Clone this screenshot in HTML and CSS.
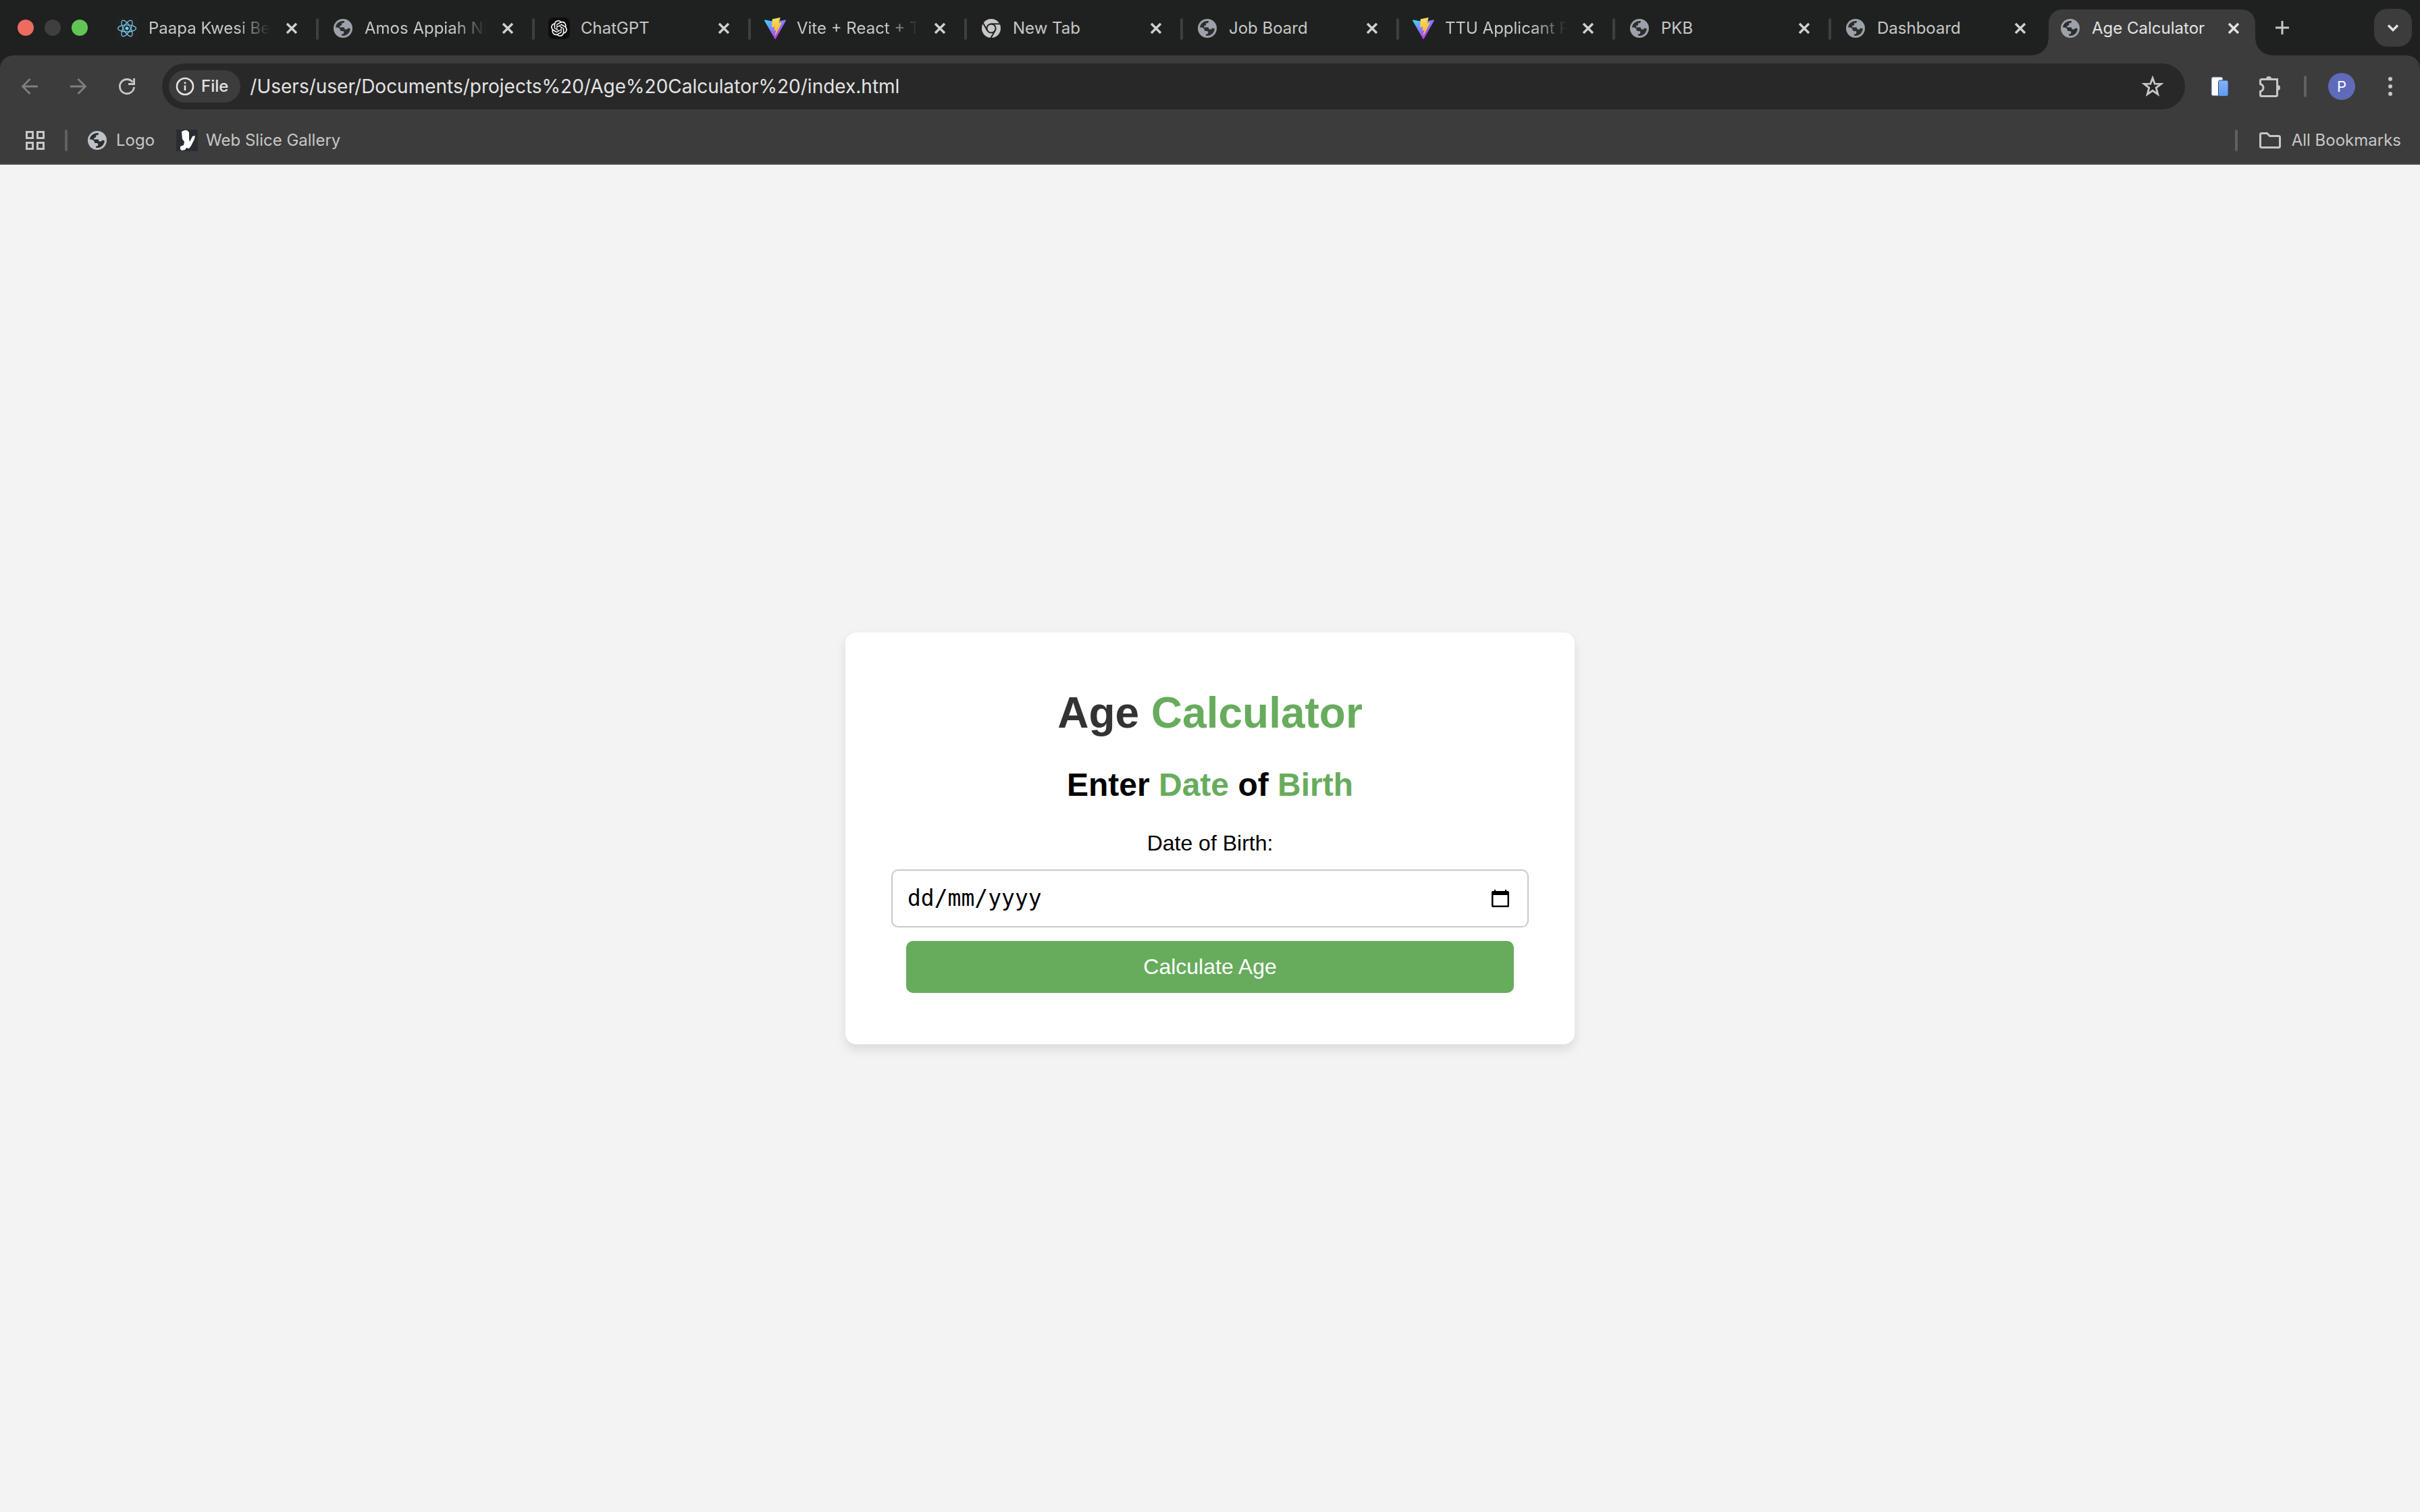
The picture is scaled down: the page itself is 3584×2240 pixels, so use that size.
FILE: index.html
```html
<!DOCTYPE html>
<html lang="en-GB">
<head>
<meta charset="utf-8">
<title>Age Calculator</title>
<link rel="stylesheet" href="styles.css">
</head>
<body>
<svg class="sprite" aria-hidden="true">
  <linearGradient id="vite-body" x1="0" y1="0.1" x2="0.6" y2="0.9"><stop offset="0" stop-color="#41d1ff"/><stop offset="1" stop-color="#bd34fe"/></linearGradient>
  <linearGradient id="vite-bolt" x1="0.4" y1="0" x2="0.6" y2="1"><stop offset="0" stop-color="#f9e056"/><stop offset="1" stop-color="#f3ab3c"/></linearGradient>
  <linearGradient id="card-blue" x1="0" y1="0" x2="0" y2="1"><stop offset="0" stop-color="#84b4fa"/><stop offset="1" stop-color="#5f99f0"/></linearGradient>
  <symbol id="globe" viewBox="0 0 32 32">
    <circle cx="16" cy="16" r="14" fill="currentColor"/>
    <path class="globe-sea" d="M5 14.6C5.6 9.4 10.200 5 17 5.100L18.200 5.400Q18 8 15.600 8.300H14.200V10.400Q14 12 12 12.200H11.200V14.500H17.200Q18.400 14.800 18.500 17.400H21Q23 17.200 23.600 15.500L26.900 16.500C26.500 22.500 21.500 27.200 16 27L14 26.700V24.500H16Q17.400 24 17.300 21.500Q17.200 20 15.500 19.900H13Q11.800 19.800 11.600 17.500Q10.500 14.800 8 14.800Z"/>
  </symbol>
  <symbol id="react" viewBox="0 0 32 32">
    <rect width="32" height="32" rx="4" fill="#222"/>
    <g fill="none" stroke="#77cdee" stroke-width="1.200"><ellipse cx="16" cy="16" rx="13.400" ry="5.200"/><ellipse cx="16" cy="16" rx="13.400" ry="5.200" transform="rotate(60 16 16)"/><ellipse cx="16" cy="16" rx="13.400" ry="5.200" transform="rotate(120 16 16)"/></g>
    <circle cx="16" cy="16" r="2.500" fill="#77cdee"/>
  </symbol>
  <symbol id="openai" viewBox="0 0 32 32">
    <rect width="32" height="32" rx="8" fill="#0d0d0d"/>
    <path transform="translate(4 4)" fill="#fff" d="M22.2819 9.8211a5.9847 5.9847 0 0 0-.5157-4.9108 6.0462 6.0462 0 0 0-6.5098-2.9A6.0651 6.0651 0 0 0 4.9807 4.1818a5.9847 5.9847 0 0 0-3.9977 2.9 6.0462 6.0462 0 0 0 .7427 7.0966 5.98 5.98 0 0 0 .511 4.9107 6.051 6.051 0 0 0 6.5146 2.9001A5.9847 5.9847 0 0 0 13.2599 24a6.0557 6.0557 0 0 0 5.7718-4.2058 5.9894 5.9894 0 0 0 3.9977-2.9001 6.0557 6.0557 0 0 0-.7475-7.0729zm-9.022 12.6081a4.4755 4.4755 0 0 1-2.8764-1.0408l.1419-.0804 4.7783-2.7582a.7948.7948 0 0 0 .3927-.6813v-6.7369l2.02 1.1686a.071.071 0 0 1 .038.052v5.5826a4.504 4.504 0 0 1-4.4945 4.4944zm-9.6607-4.1254a4.4708 4.4708 0 0 1-.5346-3.0137l.142.0852 4.783 2.7582a.7712.7712 0 0 0 .7806 0l5.8428-3.3685v2.3324a.0804.0804 0 0 1-.0332.0615L9.74 19.9502a4.4992 4.4992 0 0 1-6.1408-1.6464zM2.3408 7.8956a4.485 4.485 0 0 1 2.3655-1.9728V11.6a.7664.7664 0 0 0 .3879.6765l5.8144 3.3543-2.0201 1.1685a.0757.0757 0 0 1-.071 0l-4.8303-2.7865A4.504 4.504 0 0 1 2.3408 7.872zm16.5963 3.8558L13.1038 8.364 15.1192 7.2a.0757.0757 0 0 1 .071 0l4.8303 2.7913a4.4944 4.4944 0 0 1-.6765 8.1042v-5.6772a.79.79 0 0 0-.407-.667zm2.0107-3.0231l-.142-.0852-4.7735-2.7818a.7759.7759 0 0 0-.7854 0L9.409 9.2297V6.8974a.0662.0662 0 0 1 .0284-.0615l4.8303-2.7866a4.4992 4.4992 0 0 1 6.6802 4.66zM8.3065 12.863l-2.02-1.1638a.0804.0804 0 0 1-.038-.0567V6.0742a4.4992 4.4992 0 0 1 7.3757-3.4537l-.142.0805L8.704 5.459a.7948.7948 0 0 0-.3927.6813zm1.0976-2.3654l2.602-1.4998 2.6069 1.4998v2.9994l-2.5974 1.4997-2.6067-1.4997Z"/>
  </symbol>
  <symbol id="vite" viewBox="0 0 256 257">
    <path fill="url(#vite-body)" d="M255.153 37.938 134.897 252.976c-2.483 4.44-8.862 4.466-11.382.048L.875 37.958c-2.746-4.814 1.371-10.646 6.827-9.67l120.385 21.517a6.537 6.537 0 0 0 2.322-.004l117.867-21.483c5.438-.991 9.574 4.796 6.877 9.62Z"/>
    <path fill="url(#vite-bolt)" d="M185.432.063 96.44 17.501a3.268 3.268 0 0 0-2.634 3.014l-5.474 92.456a3.268 3.268 0 0 0 3.997 3.378l24.777-5.718c2.318-.535 4.413 1.507 3.936 3.838l-7.361 36.047c-.495 2.426 1.782 4.5 4.151 3.78l15.304-4.649c2.372-.72 4.652 1.36 4.15 3.788l-11.698 56.621c-.732 3.542 3.979 5.473 5.943 2.437l1.313-2.028 72.516-144.72c1.215-2.423-.88-5.186-3.54-4.672l-25.505 4.922c-2.396.462-4.435-1.77-3.759-4.114l16.646-57.705c.677-2.35-1.37-4.583-3.769-4.113Z"/>
  </symbol>
  <symbol id="chrome" viewBox="0 0 32 32">
    <circle cx="16" cy="16" r="14" fill="#c7c7c7"/>
    <g fill="none" stroke="#1f2120" stroke-width="2"><circle cx="16" cy="16" r="6.600"/><path d="M16 9.400H29"/><path d="M16 9.400H29" transform="rotate(120 16 16)"/><path d="M16 9.400H29" transform="rotate(240 16 16)"/></g>
  </symbol>
  <symbol id="close" viewBox="0 0 32 32"><path d="M9 9 23 23M23 9 9 23" fill="none" stroke="currentColor" stroke-width="3.400"/></symbol>
</svg>

<header class="browser">
  <div class="tab-strip">
    <div class="window-controls">
      <button class="light light-close" aria-label="Close window"></button>
      <button class="light light-minimise" aria-label="Minimise window"></button>
      <button class="light light-zoom" aria-label="Zoom window"></button>
    </div>
    <nav class="tabs" aria-label="Tabs">
      <div class="tab"><svg class="favicon"><use href="#react"/></svg><a class="tab-title clipped" href="#">Paapa Kwesi Be</a><button class="tab-close" aria-label="Close tab"><svg class="glyph"><use href="#close"/></svg></button></div>
      <div class="tab"><svg class="favicon"><use href="#globe"/></svg><a class="tab-title clipped" href="#">Amos Appiah Nk</a><button class="tab-close" aria-label="Close tab"><svg class="glyph"><use href="#close"/></svg></button></div>
      <div class="tab"><svg class="favicon"><use href="#openai"/></svg><a class="tab-title" href="#">ChatGPT</a><button class="tab-close" aria-label="Close tab"><svg class="glyph"><use href="#close"/></svg></button></div>
      <div class="tab"><svg class="favicon"><use href="#vite"/></svg><a class="tab-title clipped" href="#">Vite + React + T</a><button class="tab-close" aria-label="Close tab"><svg class="glyph"><use href="#close"/></svg></button></div>
      <div class="tab"><svg class="favicon"><use href="#chrome"/></svg><a class="tab-title" href="#">New Tab</a><button class="tab-close" aria-label="Close tab"><svg class="glyph"><use href="#close"/></svg></button></div>
      <div class="tab"><svg class="favicon"><use href="#globe"/></svg><a class="tab-title" href="#">Job Board</a><button class="tab-close" aria-label="Close tab"><svg class="glyph"><use href="#close"/></svg></button></div>
      <div class="tab"><svg class="favicon"><use href="#vite"/></svg><a class="tab-title clipped" href="#">TTU Applicant P</a><button class="tab-close" aria-label="Close tab"><svg class="glyph"><use href="#close"/></svg></button></div>
      <div class="tab"><svg class="favicon"><use href="#globe"/></svg><a class="tab-title" href="#">PKB</a><button class="tab-close" aria-label="Close tab"><svg class="glyph"><use href="#close"/></svg></button></div>
      <div class="tab"><svg class="favicon"><use href="#globe"/></svg><a class="tab-title" href="#">Dashboard</a><button class="tab-close" aria-label="Close tab"><svg class="glyph"><use href="#close"/></svg></button></div>
      <div class="tab active"><svg class="favicon"><use href="#globe"/></svg><a class="tab-title" href="#" aria-current="page">Age Calculator</a><button class="tab-close" aria-label="Close tab"><svg class="glyph"><use href="#close"/></svg></button></div>
    </nav>
    <button class="new-tab" aria-label="New tab"><svg class="glyph" viewBox="0 0 32 32"><path d="M16 6V26M6 16H26" stroke="currentColor" stroke-width="3"/></svg></button>
    <button class="tab-search" aria-label="Search tabs"><svg class="glyph" viewBox="0 0 32 32"><path d="M9 12.500 16 19.500 23 12.500" fill="none" stroke="currentColor" stroke-width="3.400"/></svg></button>
  </div>

  <div class="toolbar">
    <div class="nav-buttons">
      <button class="icon-button dim" aria-label="Back"><svg class="glyph" viewBox="0 0 32 32"><path d="M28 16H6M16.500 5 5.500 16 16.500 27" fill="none" stroke="currentColor" stroke-width="2.800"/></svg></button>
      <button class="icon-button dim" aria-label="Forward"><svg class="glyph" viewBox="0 0 32 32"><path d="M4 16H26M15.500 5 26.500 16 15.500 27" fill="none" stroke="currentColor" stroke-width="2.800"/></svg></button>
      <button class="icon-button" aria-label="Reload"><svg class="glyph" viewBox="0 0 32 32"><path d="M26.600 17A10.600 10.600 0 1 1 24.500 9.700M26.600 4V12.500H18" fill="none" stroke="currentColor" stroke-width="2.800"/></svg></button>
    </div>
    <div class="omnibox">
      <button class="scheme"><svg class="glyph" viewBox="0 0 32 32"><circle cx="16" cy="16" r="12" fill="none" stroke="currentColor" stroke-width="2.600"/><path d="M16 14.500V22M16 9.500V12.300" stroke="currentColor" stroke-width="2.600"/></svg>File</button>
      <input class="address" type="text" aria-label="Address" value="/Users/user/Documents/projects%20/Age%20Calculator%20/index.html">
      <button class="icon-button" aria-label="Bookmark this tab"><svg class="glyph" viewBox="0 0 32 32"><path d="M16 3.500 19.200 12.200 28.500 12.400 21.200 18.100 23.800 27.600 16 22.300 8.200 27.600 10.800 18.100 3.500 12.400 12.800 12.200Z" fill="none" stroke="currentColor" stroke-width="2.800"/></svg></button>
    </div>
    <div class="actions">
      <button class="icon-button" aria-label="Cards extension"><svg class="glyph" viewBox="0 0 32 32"><rect x="3" y="2" width="17" height="28" rx="2.500" fill="#fff" stroke="#46587c"/><rect x="13.500" y="7" width="14.500" height="23.500" rx="2.500" fill="url(#card-blue)" stroke="#38496c"/></svg></button>
      <button class="icon-button" aria-label="Extensions"><svg class="glyph" viewBox="0 0 32 32"><path d="M3.500 5.500H26.500V28.500Q26.500 30.500 24.500 30.500H3.500Q1.500 30.500 1.500 28.500V23.500Q6 22 6 18Q6 14 1.500 12.500V7.500Q1.500 5.500 3.500 5.500Z" fill="none" stroke="currentColor" stroke-width="3"/><path d="M10 5A4 4 0 0 1 18 5ZM27 14A4 4 0 0 1 27 22Z" fill="currentColor"/></svg></button>
      <span class="divider"></span>
      <button class="avatar" aria-label="Profile">P</button>
      <button class="icon-button" aria-label="Menu"><svg class="glyph" viewBox="0 0 32 32" fill="currentColor"><circle cx="16" cy="5" r="3"/><circle cx="16" cy="16" r="3"/><circle cx="16" cy="27" r="3"/></svg></button>
    </div>
  </div>

  <nav class="bookmarks" aria-label="Bookmarks">
    <button class="icon-button" aria-label="Apps"><svg class="glyph" viewBox="0 0 32 32" fill="none" stroke="currentColor" stroke-width="3"><path d="M3.500 3.500H12.500V12.500H3.500ZM19.500 3.500H28.500V12.500H19.500ZM3.500 19.500H12.500V28.500H3.500ZM19.500 19.500H28.500V28.500H19.500Z"/></svg></button>
    <span class="divider"></span>
    <a class="bookmark pale" href="#"><svg class="favicon"><use href="#globe"/></svg>Logo</a>
    <a class="bookmark" href="#"><svg class="favicon" viewBox="0 0 32 32"><rect width="32" height="32" fill="#292d31"/><path d="M8 3 12 1H16L19 4V14L20 18L24 10L28 9L27 14L22 24L19 28L15 27L13 30L8 31L6 29V25L11 23L12 18L9 14Z" fill="#fff"/></svg>Web Slice Gallery</a>
    <span class="divider push"></span>
    <a class="bookmark all" href="#"><svg class="favicon" viewBox="0 0 32 32"><path d="M3.500 5.500H11.500L15.500 9.500H28.500Q30.500 9.500 30.500 11.500V24.500Q30.500 26.500 28.500 26.500H3.500Q1.500 26.500 1.500 24.500V7.500Q1.500 5.500 3.500 5.500Z" fill="none" stroke="currentColor" stroke-width="3"/></svg>All Bookmarks</a>
  </nav>
</header>

<main class="page">
  <form class="card">
    <h1 class="title">Age <span class="accent">Calculator</span></h1>
    <h2 class="subtitle">Enter <span class="accent">Date</span> of <span class="accent">Birth</span></h2>
    <label class="label" for="dob">Date of Birth:</label>
    <div class="field">
      <input class="date" id="dob" type="text" placeholder="dd/mm/yyyy">
      <button class="picker" type="button" aria-label="Show date picker"><svg class="glyph" viewBox="0 0 32 32"><path d="M7 3H9V5H23V3H25V5H27Q29 5 29 7V27Q29 29 27 29H5Q3 29 3 27V7Q3 5 5 5H7ZM5.500 11V26.500H26.500V11Z" fill="#000" fill-rule="evenodd"/></svg></button>
    </div>
    <button class="submit" type="button">Calculate Age</button>
  </form>
</main>
</body>
</html>
```
FILE: styles.css
```css
* { box-sizing: border-box; }

body {
  margin: 0;
  min-height: 100vh;
  display: flex;
  flex-direction: column;
  background: #f3f3f3;
  font-family: "Liberation Sans", Arial, sans-serif;
}

button, input { font: inherit; color: inherit; margin: 0; padding: 0; border: 0; background: none; }
a { color: inherit; text-decoration: none; }
.sprite { position: absolute; width: 0; height: 0; }
.glyph { display: block; width: 32px; height: 32px; flex: none; }
.favicon { display: block; width: 32px; height: 32px; flex: none; }
.globe-sea { fill: #2c2e2e; }

/* Browser frame */
.browser {
  background: #1f2120;
  color: #c7c7c7;
  font: 24px/32px Inter, sans-serif;
}

.tab-strip { display: flex; align-items: center; height: 82px; padding-right: 12px; }
.window-controls { display: flex; gap: 16px; padding: 0 22px 0 26px; }
.light { width: 24px; height: 24px; border-radius: 50%; }
.light-close { background: #ed6b5f; }
.light-minimise { background: #3f3f3f; }
.light-zoom { background: #62c655; }

.tabs { display: flex; flex: 0 1 auto; align-self: stretch; min-width: 0; }
.tab {
  display: flex;
  align-items: center;
  flex: 0 1 320px;
  width: 320px;
  min-width: 0;
  padding: 2px 20px 0;
  color: #9da1a9;
}
.tab:not(.active)::after { content: ""; flex: none; width: 4px; height: 32px; border-radius: 2px; background: #3f3f3f; margin: 2px -20px 0 20px; }
.tab:nth-last-child(2)::after { visibility: hidden; }
.tab-title { flex: 1; min-width: 0; margin-left: 16px; overflow: hidden; white-space: nowrap; color: #c7c7c7; }
.clipped { margin-right: 16px; -webkit-mask-image: linear-gradient(to left, transparent, #000 48px); mask-image: linear-gradient(to left, transparent, #000 48px); }
.tab-close { color: #d0d0d0; }

.tab.active {
  position: relative;
  flex-basis: 306px;
  width: 306px;
  align-self: flex-end;
  height: 68px;
  margin-left: 2px;
  padding: 0 16px 12px;
  border-radius: 20px 20px 0 0;
  background: #3c3c3c;
}
.active .tab-title, .active .tab-close { color: #e3e3e3; }
.tab.active::before, .tab.active::after {
  content: "";
  position: absolute;
  bottom: 0;
  width: 24px;
  height: 24px;
  background: radial-gradient(circle at 0 0, transparent 23px, #3c3c3c 24px);
}
.tab.active::before { right: 100%; }
.tab.active::after { left: 100%; background: radial-gradient(circle at 100% 0, transparent 23px, #3c3c3c 24px); }

.new-tab { margin-left: 24px; }
.tab-search {
  display: grid;
  place-items: center;
  width: 56px;
  height: 56px;
  margin-left: auto;
  border-radius: 20px;
  background: #3c3c3c;
  color: #e3e3e3;
}

.toolbar {
  display: flex;
  align-items: center;
  padding: 12px 28px;
  border-radius: 20px 20px 0 0;
  background: #3c3c3c;
}
.icon-button { flex: none; }
.dim { color: #7f7f7f; }
.nav-buttons { display: flex; gap: 40px; padding-right: 36px; }
.omnibox {
  display: flex;
  align-items: center;
  flex: 1;
  height: 68px;
  padding: 0 32px 0 10px;
  border-radius: 34px;
  background: #282828;
}
.scheme {
  display: flex;
  align-items: center;
  gap: 8px;
  height: 48px;
  padding: 0 18px 0 8px;
  border-radius: 24px;
  background: #3c3c3c;
  color: #e3e3e3;
  font-weight: 500;
}
.address { flex: 1; min-width: 0; margin-left: 14px; color: #e3e3e3; font-size: 28px; line-height: 36px; }
.actions { display: flex; align-items: center; padding-left: 36px; }
.actions .icon-button + .icon-button { margin-left: 42px; }
.divider { flex: none; width: 4px; height: 32px; border-radius: 2px; background: #606060; }
.actions .divider { margin: 0 32px 0 34px; }
.avatar { width: 40px; height: 40px; margin-right: 36px; border-radius: 50%; background: #5f6bb9; color: #fff; font-size: 22px; line-height: 40px; text-align: center; }

.bookmarks {
  display: flex;
  align-items: center;
  height: 70px;
  padding: 0 28px 0 36px;
  border-bottom: 2px solid #4a484a;
  background: #3c3c3c;
}
.bookmarks .icon-button + .divider { margin: 0 28px; }
.bookmark { display: flex; align-items: center; gap: 12px; margin-right: 32px; }
.pale .favicon { color: #bdc1c8; }
.push { margin-left: auto; }
.all { gap: 16px; margin: 0 0 0 32px; }

/* Calculator */
.page { display: flex; flex: 1; align-items: center; justify-content: center; }
.card {
  display: flex;
  flex-direction: column;
  align-items: center;
  width: 1080px;
  max-width: 100%;
  padding: 82px 68px 76px;
  border-radius: 16px;
  background: #fff;
  box-shadow: 0 8px 16px rgba(0, 0, 0, 0.1);
  color: #000;
  font-size: 32px;
  line-height: 37px;
}
.title { margin: 0 0 42px; color: #333; font-size: 64px; line-height: 74px; }
.subtitle { margin: 0 0 40px; font-size: 48px; line-height: 56px; }
.accent { color: #67ac5d; }
.label { margin-bottom: 20px; }
.field {
  display: flex;
  align-items: center;
  width: 100%;
  height: 86px;
  margin-bottom: 20px;
  padding: 0 24px 0 22px;
  border: 2px solid #c9c9c9;
  border-radius: 10px;
}
.date { flex: 1; min-width: 0; font: 33px/40px "DejaVu Sans Mono", monospace; }
.date::placeholder { color: #000; opacity: 1; }
.submit { align-self: stretch; margin: 0 22px; height: 77px; border-radius: 10px; background: #67ac5d; color: #fff; }
```
